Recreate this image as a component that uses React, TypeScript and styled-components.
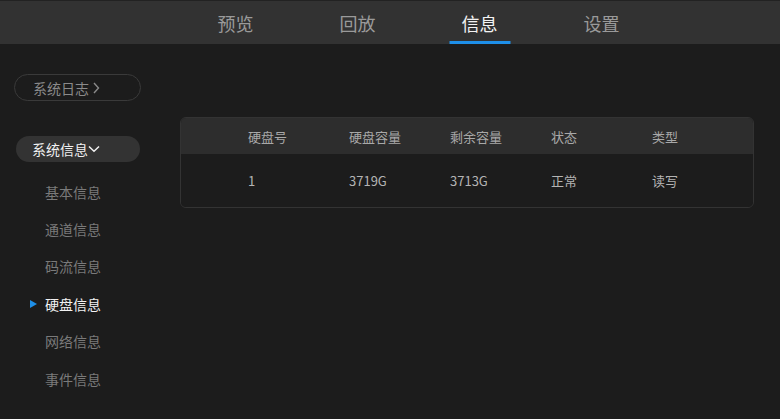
import React, { useState } from "react";
import styled, { createGlobalStyle } from "styled-components";

const GlobalStyle = createGlobalStyle`
  html, body {
    margin: 0;
    padding: 0;
    background: #1c1c1c;
  }
  body {
    font-family: "Noto Sans CJK SC", "Noto Sans", sans-serif;
  }
`;

const Page = styled.div`
  width: 780px;
  height: 419px;
  background: #1c1c1c;
  display: flex;
  flex-direction: column;
  overflow: hidden;
`;

const TopBar = styled.div`
  height: 43px;
  background: #323232;
  border-top: 1px solid #222;
  display: flex;
  justify-content: center;
  padding-left: 57px;
`;

const Tab = styled.div<{ $active?: boolean }>`
  width: 122px;
  display: flex;
  align-items: center;
  justify-content: center;
  position: relative;
  font-size: 18px;
  color: ${(p) => (p.$active ? "#f2f2f2" : "#9a9a9a")};
  cursor: pointer;
  &::after {
    content: "";
    display: ${(p) => (p.$active ? "block" : "none")};
    position: absolute;
    bottom: 0;
    left: 50%;
    transform: translateX(-50%);
    width: 61px;
    height: 3px;
    background: #1e8fe8;
  }
`;

const Body = styled.div`
  flex: 1;
  display: flex;
`;

const Sidebar = styled.div`
  width: 180px;
  box-sizing: border-box;
  padding: 30px 0 0 14px;
  display: flex;
  flex-direction: column;
`;

const LogButton = styled.div`
  width: 127px;
  height: 27px;
  border: 1px solid #3a3a3a;
  border-radius: 14px;
  display: flex;
  align-items: center;
  padding-left: 18px;
  box-sizing: border-box;
  font-size: 14px;
  color: #8a8a8a;
  gap: 4px;
`;

const GroupButton = styled.div`
  margin: 35px 0 0 2px;
  width: 124px;
  height: 26px;
  border-radius: 13px;
  background: #333333;
  display: flex;
  align-items: center;
  padding-left: 16px;
  box-sizing: border-box;
  font-size: 14px;
  color: #f0f0f0;
`;

const Menu = styled.ul`
  list-style: none;
  margin: 11px 0 0 0;
  padding: 0;
  display: flex;
  flex-direction: column;
`;

const MenuItem = styled.li<{ $active?: boolean }>`
  height: 37.4px;
  display: flex;
  align-items: center;
  padding-left: 31px;
  position: relative;
  font-size: 14px;
  color: ${(p) => (p.$active ? "#f2f2f2" : "#7a7a7a")};
  cursor: pointer;
  &::before {
    content: "";
    display: ${(p) => (p.$active ? "block" : "none")};
    position: absolute;
    left: 16px;
    top: 50%;
    transform: translateY(-50%);
    border-left: 7px solid #1e8fe8;
    border-top: 4px solid transparent;
    border-bottom: 4px solid transparent;
  }
`;

const Content = styled.div`
  flex: 1;
  padding: 73px 26px 0 1px;
`;

const Table = styled.div`
  width: 572px;
  border: 1px solid #333;
  border-radius: 6px;
  overflow: hidden;
`;

const Row = styled.div<{ $head?: boolean }>`
  height: ${(p) => (p.$head ? "36px" : "53px")};
  background: ${(p) => (p.$head ? "#2d2d2d" : "#1c1c1c")};
  display: grid;
  grid-template-columns: repeat(5, 101px);
  padding-left: 67px;
  align-items: center;
  font-size: 13px;
  color: ${(p) => (p.$head ? "#a8a8a8" : "#b4b4b4")};
`;

const Cell = styled.div``;

const Chevron = ({ dir }: { dir: "right" | "down" }) =>
  dir === "right" ? (
    <svg width="7" height="12" viewBox="0 0 7 12" fill="none">
      <path d="M1 1 L5.5 6 L1 11" stroke="#8a8a8a" strokeWidth="1.4" />
    </svg>
  ) : (
    <svg width="12" height="8" viewBox="0 0 12 8" fill="none">
      <path d="M1 1.5 L6 6.3 L11 1.5" stroke="#f0f0f0" strokeWidth="1.5" />
    </svg>
  );

const tabs = ["预览", "回放", "信息", "设置"];
const menu = ["基本信息", "通道信息", "码流信息", "硬盘信息", "网络信息", "事件信息"];
const columns = ["硬盘号", "硬盘容量", "剩余容量", "状态", "类型"];
const disks = [["1", "3719G", "3713G", "正常", "读写"]];

const App = () => {
  const [tab, setTab] = useState("信息");
  const [item, setItem] = useState("硬盘信息");

  return (
    <Page>
      <GlobalStyle />
      <TopBar>
        {tabs.map((t) => (
          <Tab key={t} $active={t === tab} onClick={() => setTab(t)}>
            {t}
          </Tab>
        ))}
      </TopBar>
      <Body>
        <Sidebar>
          <LogButton>
            系统日志
            <Chevron dir="right" />
          </LogButton>
          <GroupButton>
            系统信息
            <Chevron dir="down" />
          </GroupButton>
          <Menu>
            {menu.map((m) => (
              <MenuItem key={m} $active={m === item} onClick={() => setItem(m)}>
                {m}
              </MenuItem>
            ))}
          </Menu>
        </Sidebar>
        <Content>
          <Table>
            <Row $head>
              {columns.map((c) => (
                <Cell key={c}>{c}</Cell>
              ))}
            </Row>
            {disks.map((d, i) => (
              <Row key={i}>
                {d.map((v, j) => (
                  <Cell key={j}>{v}</Cell>
                ))}
              </Row>
            ))}
          </Table>
        </Content>
      </Body>
    </Page>
  );
};

export default App;
